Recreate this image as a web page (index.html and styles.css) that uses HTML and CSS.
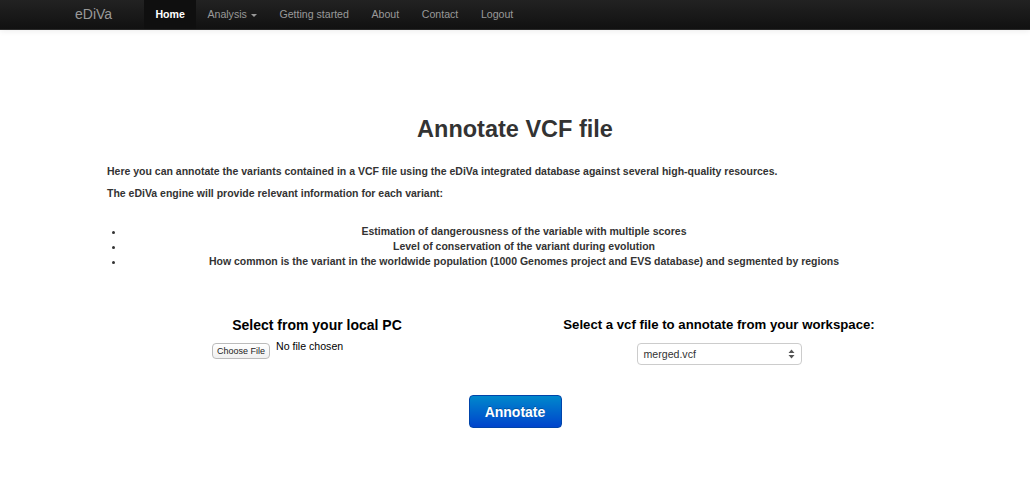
FILE: index.html
```html
<!DOCTYPE html>
<html>
<head>
<meta charset="utf-8">
<title>eDiVa - Annotate</title>
<link rel="stylesheet" href="styles.css">
</head>
<body>
<div class="navbar">
  <div class="nav-inner">
    <a class="brand" href="#">eDiVa</a>
    <ul class="nav">
      <li class="active"><a href="#">Home</a></li>
      <li><a href="#">Analysis <span class="caret"></span></a></li>
      <li><a href="#">Getting started</a></li>
      <li><a href="#">About</a></li>
      <li><a href="#">Contact</a></li>
      <li><a href="#">Logout</a></li>
    </ul>
  </div>
</div>
<div class="container">
  <h1 class="title">Annotate VCF file</h1>
  <p class="intro">Here you can annotate the variants contained in a VCF file using the eDiVa integrated database against several high-quality resources.</p>
  <p class="intro">The eDiVa engine will provide relevant information for each variant:</p>
  <ul class="features">
    <li>Estimation of dangerousness of the variable with multiple scores</li>
    <li>Level of conservation of the variant during evolution</li>
    <li>How common is the variant in the worldwide population (1000 Genomes project and EVS database) and segmented by regions</li>
  </ul>
  <div class="columns">
    <div class="col col-left">
      <h4 class="col-title">Select from your local PC</h4>
      <div class="file-input">
        <span class="file-btn">Choose File</span>
        <span class="file-name">No file chosen</span>
      </div>
    </div>
    <div class="col col-right">
      <h4 class="col-title col-title-right">Select a vcf file to annotate from your workspace:</h4>
      <div class="select">
        <span>merged.vcf</span>
        <svg class="arrows" width="7" height="10" viewBox="0 0 7 10"><path d="M3.5 0.5 L6.5 4 H0.5 Z M3.5 9.5 L6.5 6 H0.5 Z" fill="#555"/></svg>
      </div>
    </div>
  </div>
  <div class="actions">
    <button class="btn-primary">Annotate</button>
  </div>
</div>
</body>
</html>
```

FILE: styles.css
```css
html, body {
  margin: 0;
  padding: 0;
  background: #fff;
  font-family: "Liberation Sans", Arial, sans-serif;
  color: #333;
}

.navbar {
  height: 29px;
  background: linear-gradient(to bottom, #222 0%, #111 100%);
  border-bottom: 1px solid #2a2a2a;
  box-shadow: 0 1px 6px rgba(0, 0, 0, 0.08);
}

.nav-inner {
  display: flex;
  align-items: stretch;
  height: 29px;
  padding-left: 75px;
}

.brand {
  color: #999;
  text-decoration: none;
  font-size: 14px;
  line-height: 29px;
  margin-right: 32px;
}

.nav {
  display: flex;
  list-style: none;
  margin: 0;
  padding: 0;
}

.nav li a {
  display: block;
  padding: 0 11.3px;
  line-height: 29px;
  font-size: 10.6px;
  color: #999;
  text-decoration: none;
}

.nav li.active a {
  background: #0f0f0f;
  color: #fff;
  font-weight: bold;
}

.caret {
  display: inline-block;
  width: 0;
  height: 0;
  border-left: 3px solid transparent;
  border-right: 3px solid transparent;
  border-top: 3px solid #999;
  vertical-align: middle;
  margin-left: 1px;
}

.container {
  width: 816px;
  margin: 0 auto;
}

.title {
  text-align: center;
  font-size: 23.5px;
  font-weight: bold;
  color: #333;
  margin: 85px 0 22px;
  line-height: 28px;
}

.intro {
  font-size: 10.5px;
  font-weight: bold;
  color: #333;
  margin: 0 0 9px;
  line-height: 13px;
}

.features {
  margin: 24px 0 47px;
  padding-left: 18px;
  text-align: center;
  font-size: 10.5px;
  font-weight: bold;
  line-height: 15px;
  color: #333;
}

.columns {
  display: grid;
  grid-template-columns: 1fr 1fr;
}

.col {
  display: flex;
  flex-direction: column;
  align-items: center;
}

.col-title {
  font-size: 14px;
  font-weight: bold;
  color: #000;
  margin: 0 0 6px;
  line-height: 18px;
}

.col-title-right {
  font-size: 13.2px;
}

.col-left {
  padding-left: 12px;
}

.file-input {
  display: flex;
  align-items: flex-start;
  align-self: flex-start;
  margin-left: 93px;
  font-size: 10.6px;
}

.file-btn {
  display: inline-block;
  font-size: 9px;
  color: #222;
  padding: 2px 4px;
  margin-top: 3px;
  border: 1px solid #bbb;
  border-radius: 4px;
  background: linear-gradient(#fff, #f0f0f0);
}

.file-name {
  margin-left: 6px;
  color: #000;
}

.select {
  width: 151px;
  height: 20px;
  margin-top: 3px;
  border: 1px solid #ccc;
  border-radius: 4px;
  display: flex;
  align-items: center;
  justify-content: space-between;
  padding: 0 6px 0 6px;
  box-sizing: content-box;
  font-size: 10.6px;
  color: #333;
}

.actions {
  display: flex;
  justify-content: center;
  margin-top: 30px;
}

.btn-primary {
  width: 93px;
  height: 33px;
  border: 1px solid #0044aa;
  border-radius: 4px;
  background: linear-gradient(to bottom, #0088cc, #0044cc);
  color: #fff;
  font-family: "Liberation Sans", Arial, sans-serif;
  font-size: 14px;
  font-weight: bold;
  text-shadow: 0 -1px 0 rgba(0, 0, 0, 0.25);
}
```
